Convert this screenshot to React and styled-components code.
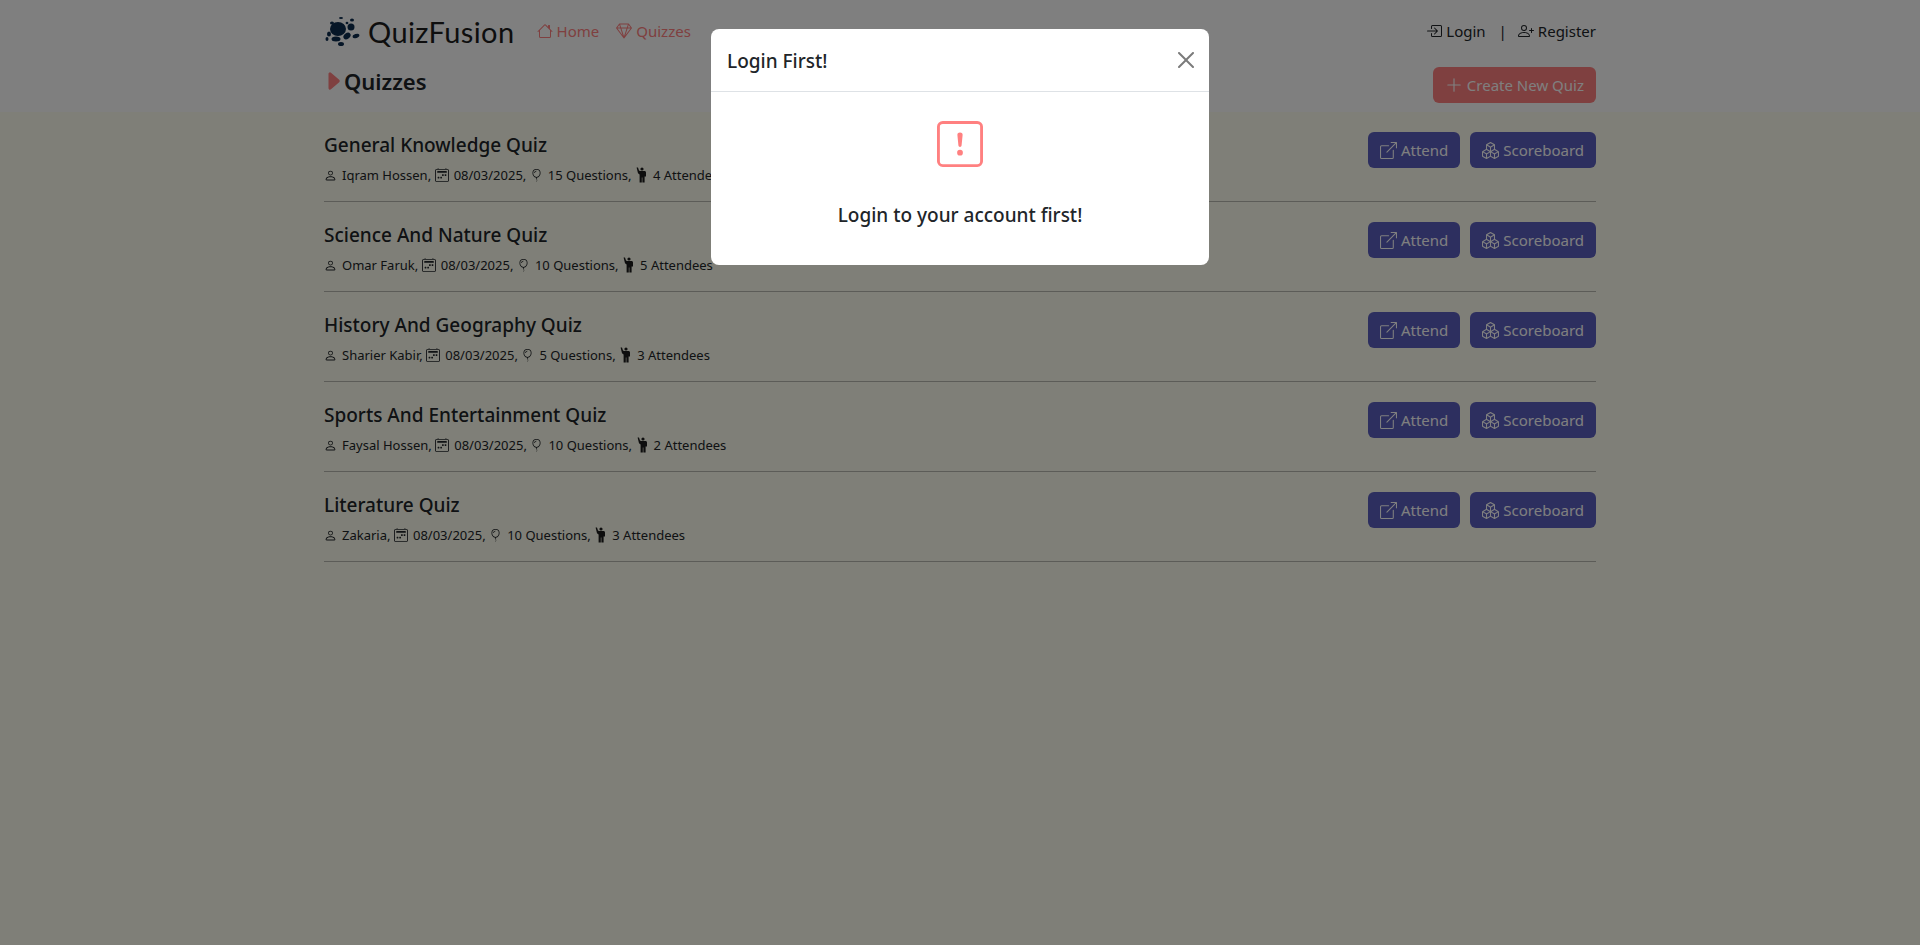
import React from "react";
import styled, { createGlobalStyle } from "styled-components";
import {
  BsHouse, BsGem, BsBoxArrowInRight, BsPersonPlus, BsPlusLg, BsBoxArrowUpRight, BsBoxes,
  BsPerson, BsCalendar2Week, BsBalloon, BsCaretRightFill, BsExclamationSquare,
} from "react-icons/bs";

const FONT = `"Noto Sans", "Open Sans", sans-serif`;

const GlobalStyle = createGlobalStyle`
  * { box-sizing: border-box; }
  html, body { margin: 0; padding: 0; }
  body {
    min-height: 100vh;
    background: #fffff0;
    font-family: ${FONT};
    font-size: 16px;
    color: #212529;
  }
`;

const Header = styled.header`
  background: #ffffff;
  height: 112px;
`;

const Container = styled.div`
  width: 1320px;
  margin: 0 auto;
  padding: 0 24px;
`;

const TopBar = styled.div`
  display: flex;
  align-items: center;
  justify-content: space-between;
  height: 62px;
`;

const LeftGroup = styled.div`
  display: flex;
  align-items: center;
`;

const Brand = styled.div`
  display: flex;
  align-items: center;
  gap: 8px;
  margin-right: 22px;
  font-family: "Lato", sans-serif;
  font-size: 29px;
  letter-spacing: 0.4px;
  color: #1c1c1c;
`;

const Nav = styled.nav`
  display: flex;
  gap: 17px;
`;

const NavLink = styled.a`
  display: flex;
  align-items: center;
  gap: 4px;
  font-size: 15px;
  color: #ff8080;
`;

const AuthGroup = styled.div`
  display: flex;
  align-items: center;
  font-size: 15px;
`;

const AuthLink = styled.a`
  display: flex;
  align-items: center;
  gap: 4px;
`;

const Divider = styled.span`
  margin: 0 11px 0 13px;
`;

const TitleBar = styled.div`
  display: flex;
  align-items: center;
  justify-content: space-between;
  padding-top: 4px;
`;

const PageTitle = styled.h1`
  display: flex;
  align-items: center;
  margin: 0;
  padding-bottom: 7px;
  font-size: 22px;
  font-weight: 600;
  svg { color: #ff8080; font-size: 24px; margin-left: -3px; margin-right: -1px; }
`;

const Button = styled.button`
  display: flex;
  align-items: center;
  gap: 4px;
  height: 36px;
  padding: 0 12px;
  border: none;
  border-radius: 6px;
  background: ${(p) => p.$bg || "#5a5ebe"};
  color: #ffffff;
  font-family: ${FONT};
  font-size: 15px;
`;

const Row = styled.div`
  display: flex;
  justify-content: space-between;
  height: 90px;
  padding-top: 20px;
  border-bottom: 1px solid #b8b8b0;
`;

const RowTitle = styled.h2`
  margin: 0 0 7px;
  font-size: 19px;
  line-height: 26px;
  font-weight: 500;
`;

const Meta = styled.div`
  display: flex;
  align-items: center;
  font-size: 13px;
  line-height: 20px;
`;

const MetaItem = styled.span`
  display: flex;
  align-items: center;
  gap: 5px;
  margin-right: 3.5px;
  white-space: pre;
`;

const Actions = styled.div`
  display: flex;
  gap: 10px;
`;

const Overlay = styled.div`
  position: fixed;
  inset: 0;
  background: rgba(0, 0, 0, 0.5);
`;

const Modal = styled.div`
  width: 498px;
  margin: 29px auto 0;
  background: #ffffff;
  border-radius: 8px;
`;

const ModalHeader = styled.div`
  display: flex;
  align-items: center;
  justify-content: space-between;
  height: 63px;
  padding: 0 15px 0 16px;
  border-bottom: 1px solid #dee2e6;
`;

const ModalTitle = styled.div`
  padding-top: 1px;
  font-size: 19px;
  font-weight: 500;
`;

const ModalBody = styled.div`
  display: flex;
  flex-direction: column;
  align-items: center;
  height: 173px;
  padding-top: 29px;
  svg { color: #ff8080; }
`;

const ModalText = styled.div`
  margin-top: 35px;
  font-size: 19px;
  font-weight: 500;
`;

const Logo = () => (
  <svg width="36" height="32" viewBox="0 0 36 32" fill="#0d2c4f">
    <ellipse cx="14" cy="14" rx="8" ry="7" />
    <ellipse cx="27" cy="12" rx="3.5" ry="3.5" />
    <ellipse cx="32" cy="21" rx="3.5" ry="2" transform="rotate(-20 32 21)" />
    <ellipse cx="23" cy="21" rx="4" ry="2.8" transform="rotate(-40 23 21)" />
    <ellipse cx="12" cy="24" rx="4.5" ry="2.5" />
    <ellipse cx="17" cy="29" rx="3" ry="2" />
    <ellipse cx="5" cy="19" rx="2" ry="2.5" />
    <ellipse cx="3" cy="24" rx="1.5" ry="2" />
    <ellipse cx="8" cy="8" rx="2" ry="1.5" />
    <ellipse cx="17" cy="3" rx="2" ry="1.1" />
    <ellipse cx="28" cy="5" rx="2" ry="1.5" />
    <ellipse cx="23" cy="8" rx="1.4" ry="1.2" />
  </svg>
);

const CloseIcon = () => (
  <svg width="16" height="16" viewBox="0 0 16 16" fill="#7b7b7b">
    <path d="M.293.293a1 1 0 0 1 1.414 0L8 6.586 14.293.293a1 1 0 1 1 1.414 1.414L9.414 8l6.293 6.293a1 1 0 0 1-1.414 1.414L8 9.414l-6.293 6.293a1 1 0 0 1-1.414-1.414L6.586 8 .293 1.707a1 1 0 0 1 0-1.414" />
  </svg>
);

// figure with one arm raised, not in the icon sets
const AttendeeIcon = () => (
  <svg width="13" height="16" viewBox="0 0 13 16" fill="#1c1c1c">
    <circle cx="7" cy="2" r="1.6" />
    <path d="M1.6 .6 L3 .4 L4 3.4 L5 4 H9.4 C10.4 4 11 4.6 11 5.6 V9.6 H9.6 V15.6 H7.4 V10.6 H6.8 V15.6 H4.6 V7.4 L3 6.2 Z" />
  </svg>
);

const quizzes = [
  { title: "General Knowledge Quiz", author: "Iqram Hossen", questions: 15, attendees: 4 },
  { title: "Science And Nature Quiz", author: "Omar Faruk", questions: 10, attendees: 5 },
  { title: "History And Geography Quiz", author: "Sharier Kabir", questions: 5, attendees: 3 },
  { title: "Sports And Entertainment Quiz", author: "Faysal Hossen", questions: 10, attendees: 2 },
  { title: "Literature Quiz", author: "Zakaria", questions: 10, attendees: 3 },
];

const App = () => {
  return (
    <>
      <GlobalStyle />
      <Header>
        <Container>
          <TopBar>
            <LeftGroup>
              <Brand>
                <Logo />
                QuizFusion
              </Brand>
              <Nav>
                <NavLink><BsHouse size={16} /> Home</NavLink>
                <NavLink><BsGem size={16} /> Quizzes</NavLink>
              </Nav>
            </LeftGroup>
            <AuthGroup>
              <AuthLink><BsBoxArrowInRight size={16} /> Login</AuthLink>
              <Divider>|</Divider>
              <AuthLink><BsPersonPlus size={16} /> Register</AuthLink>
            </AuthGroup>
          </TopBar>
          <TitleBar>
            <PageTitle><BsCaretRightFill />Quizzes</PageTitle>
            <Button $bg="#ff8080"><BsPlusLg size={18} /> Create New Quiz</Button>
          </TitleBar>
        </Container>
      </Header>
      <Container>
        {quizzes.map((q) => (
          <Row key={q.title}>
            <div>
              <RowTitle>{q.title}</RowTitle>
              <Meta>
                <MetaItem><BsPerson size={13} />{q.author},</MetaItem>
                <MetaItem><BsCalendar2Week size={14} />08/03/2025,</MetaItem>
                <MetaItem><BsBalloon size={13} />{q.questions} Questions,</MetaItem>
                <MetaItem><AttendeeIcon />{q.attendees} Attendees</MetaItem>
              </Meta>
            </div>
            <Actions>
              <Button><BsBoxArrowUpRight size={17} /> Attend</Button>
              <Button><BsBoxes size={17} /> Scoreboard</Button>
            </Actions>
          </Row>
        ))}
      </Container>
      <Overlay>
        <Modal>
          <ModalHeader>
            <ModalTitle>Login First!</ModalTitle>
            <CloseIcon />
          </ModalHeader>
          <ModalBody>
            <BsExclamationSquare size={46} />
            <ModalText>Login to your account first!</ModalText>
          </ModalBody>
        </Modal>
      </Overlay>
    </>
  );
};

export default App;
